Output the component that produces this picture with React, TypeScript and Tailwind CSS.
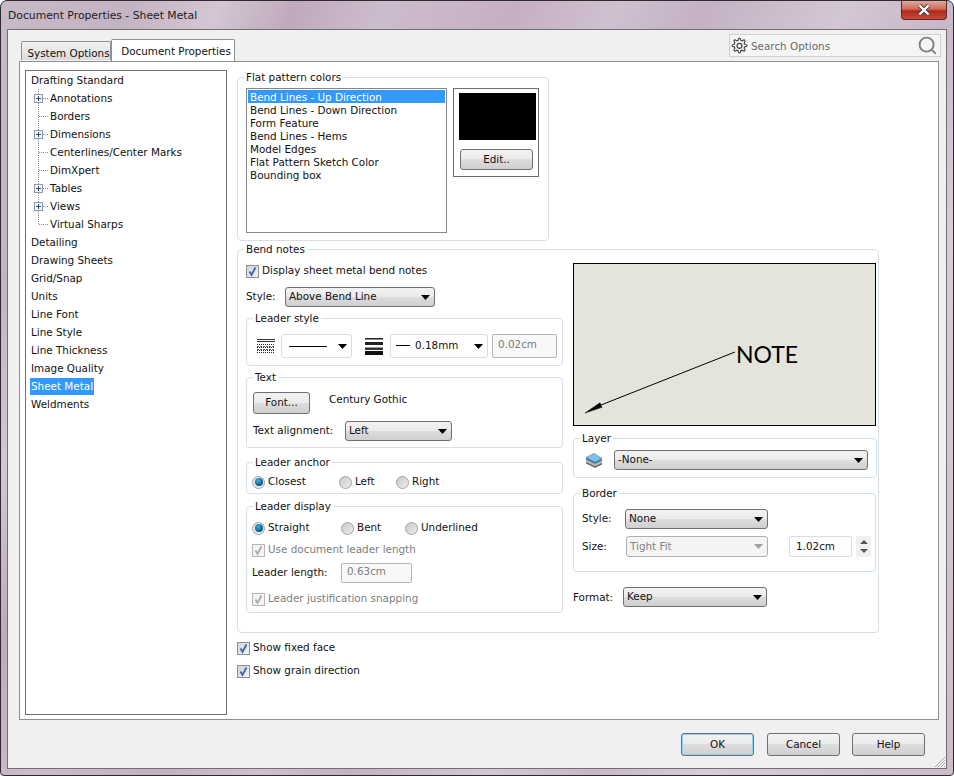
import React from "react";
import { Search } from "lucide-react";
import clsx from "clsx";

const treeItems = [
  { label: "Annotations", plus: true },
  { label: "Borders" },
  { label: "Dimensions", plus: true },
  { label: "Centerlines/Center Marks" },
  { label: "DimXpert" },
  { label: "Tables", plus: true },
  { label: "Views", plus: true },
  { label: "Virtual Sharps", last: true },
];

const rootItems = [
  "Detailing",
  "Drawing Sheets",
  "Grid/Snap",
  "Units",
  "Line Font",
  "Line Style",
  "Line Thickness",
  "Image Quality",
  "Sheet Metal",
  "Weldments",
];

const flatColors = [
  "Bend Lines - Up Direction",
  "Bend Lines - Down Direction",
  "Form Feature",
  "Bend Lines - Hems",
  "Model Edges",
  "Flat Pattern Sketch Color",
  "Bounding box",
];

function TreeGlyph({ plus, last }: { plus?: boolean; last?: boolean }) {
  return (
    <svg width="20" height="18" className="shrink-0" shapeRendering="crispEdges">
      <path d={last ? "M8.5 0V9" : "M8.5 0V18"} stroke="#8a8a8a" strokeDasharray="1 1" fill="none" />
      <path d="M9 9.5H19" stroke="#8a8a8a" strokeDasharray="1 1" fill="none" />
      {plus && (
        <>
          <rect x="4.5" y="5.5" width="8" height="8" fill="#f4f6f9" stroke="#919aa8" />
          <path d="M6 9.5H11M8.5 7V12" stroke="#2f4a80" fill="none" />
        </>
      )}
    </svg>
  );
}

function Group({
  title,
  className,
  bodyClassName,
  children,
}: {
  title: string;
  className?: string;
  bodyClassName?: string;
  children: React.ReactNode;
}) {
  return (
    <fieldset className={clsx("rounded-[4px] border border-[#d5dfe5]", className)}>
      <legend className="ml-[6px] h-[14px] px-[2px] leading-[14px]">{title}</legend>
      <div className={bodyClassName}>{children}</div>
    </fieldset>
  );
}

function Arrow({ color = "#000000" }: { color?: string }) {
  return (
    <svg width="9" height="5" viewBox="0 0 9 5" className="shrink-0">
      <path d="M0 0H9L4.5 5Z" fill={color} />
    </svg>
  );
}

function Select({
  value,
  className,
  variant = "normal",
  children,
}: {
  value?: string;
  className: string;
  variant?: "normal" | "flat" | "disabled";
  children?: React.ReactNode;
}) {
  return (
    <div
      className={clsx(
        "flex shrink-0 items-center justify-between rounded-[3px] border pl-[3px] pr-[4px]",
        variant === "normal" && "border-[#707070] bg-[linear-gradient(#f2f2f2_0%,#ebebeb_48%,#dddddd_50%,#cfcfcf_100%)]",
        variant === "flat" && "border-[#dcdcdc] bg-white",
        variant === "disabled" && "border-[#afafaf] bg-[#f4f4f4] text-[#838383]",
        className
      )}
    >
      {children ?? <span>{value}</span>}
      <Arrow color={variant === "disabled" ? "#a0a0a0" : "#000000"} />
    </div>
  );
}

function Button({ label, className }: { label: string; className?: string }) {
  return (
    <div
      className={clsx(
        "flex shrink-0 items-center justify-center rounded-[3px] border border-[#707070] bg-[linear-gradient(#f2f2f2_0%,#ebebeb_48%,#dddddd_50%,#cfcfcf_100%)]",
        className
      )}
    >
      {label}
    </div>
  );
}

function Checkbox({ label, disabled, className }: { label: string; disabled?: boolean; className?: string }) {
  return (
    <div className={clsx("flex h-[16px] items-center gap-[3px]", disabled && "text-[#7d7d7d]", className)}>
      <span
        className={clsx(
          "flex h-[13px] w-[13px] shrink-0 items-center justify-center border",
          disabled ? "border-[#b5b5b5] bg-[#f4f4f4]" : "border-[#8e8f8f] bg-[linear-gradient(135deg,#d0d5dc,#f0f2f5)]"
        )}
      >
        <svg width="11" height="11" viewBox="0 0 11 11">
          <path
            d="M2.5 5.5L4.5 9L8.5 1.5"
            fill="none"
            stroke={disabled ? "#a9a9a9" : "#4060b0"}
            strokeWidth="1.8"
          />
        </svg>
      </span>
      <span>{label}</span>
    </div>
  );
}

function Radio({ label, checked, className }: { label: string; checked?: boolean; className?: string }) {
  return (
    <div className={clsx("flex h-[16px] items-center gap-[3px]", className)}>
      <span
        className={clsx(
          "flex h-[13px] w-[13px] shrink-0 items-center justify-center rounded-full border",
          checked ? "border-[#9aa4ac] bg-[#e4eaee]" : "border-[#a2a2a2] bg-[linear-gradient(135deg,#c8c8c8,#eeeeee)]"
        )}
      >
        {checked && <span className="h-[8px] w-[8px] rounded-full bg-[radial-gradient(circle_at_40%_35%,#3fb4e2,#07517f_70%)]" />}
      </span>
      <span>{label}</span>
    </div>
  );
}

function Input({ value, className, disabled }: { value: string; className: string; disabled?: boolean }) {
  return (
    <div
      className={clsx(
        "flex shrink-0 items-center rounded-[2px] border px-[5px]",
        disabled ? "border-[#b5b5b5] bg-[#f8f8f8] text-[#7d7d7d]" : "border-[#dcdcdc] bg-white",
        className
      )}
    >
      {value}
    </div>
  );
}

function LineStyleIcon() {
  return (
    <svg width="18" height="14" viewBox="0 0 18 14" className="shrink-0" shapeRendering="crispEdges">
      <path d="M0 .5H18M0 2.5H18" stroke="#333333" />
      <path d="M0 5.5H18M0 8.5H18M0 11.5H18M0 13.500H18" stroke="#222222" strokeDasharray="1 1" />
      <path d="M0 7H18M0 10H18" stroke="#666666" strokeDasharray="2 1" />
    </svg>
  );
}

function LineThicknessIcon() {
  return (
    <svg width="18" height="17" viewBox="0 0 18 17" className="shrink-0">
      <rect x="0" y="0" width="18" height="1.5" fill="#222222" />
      <rect x="0" y="4" width="18" height="3" fill="#222222" />
      <rect x="0" y="9.5" width="18" height="2.5" fill="#333333" />
      <rect x="0" y="13" width="18" height="4" fill="#111111" />
    </svg>
  );
}

function LayerIcon() {
  return (
    <svg width="18" height="15" viewBox="0 0 18 15" className="shrink-0">
      <path d="M1 8.5L10 13L17 9.5V11.5L10 15L1 10.5Z" fill="#6b6b6b" />
      <path d="M1 6.5L10 11L17 7.5V9.5L10 13L1 8.5Z" fill="#b4b4b4" />
      <path d="M1 4.5L10 9L17 5.5V7.5L10 11L1 6.5Z" fill="#4a6f8a" />
      <path d="M1 4.5L9 .5L17 5.5L10 9Z" fill="#7cc0e8" stroke="#3f7ea8" strokeWidth=".6" />
    </svg>
  );
}

function GearIcon() {
  return (
    <svg width="17" height="17" viewBox="0 0 24 24" className="shrink-0" fill="none" stroke="#444444" strokeWidth="1.7">
      <path d="M12 1.5c1 0 1.600.5 1.900 3.200l2 .8c2-1.600 2.800-1.700 3.600-.9s.7 1.600-.9 3.600l.8 2c2.700.3 3.200.9 3.200 1.800s-.5 1.600-3.200 1.900l-.8 2c1.600 2 1.700 2.800.9 3.600s-1.600.7-3.600-.9l-2 .8c-.3 2.700-.9 3.200-1.900 3.200s-1.600-.5-1.900-3.200l-2-.8c-2 1.600-2.800 1.700-3.600.9s-.7-1.600.9-3.600l-.8-2c-2.700-.3-3.200-.9-3.200-1.900s.5-1.500 3.200-1.800l.8-2c-1.600-2-1.700-2.800-.9-3.600s1.600-.7 3.600.9l2-.8c.3-2.700.9-3.200 1.900-3.200Z" />
      <circle cx="12" cy="12.500" r="3.500" />
    </svg>
  );
}

export default function App() {
  return (
    <div className="flex h-[776px] w-[954px] flex-col overflow-hidden rounded-b-[4px] rounded-t-[7px] border border-[#2e2a30] bg-[linear-gradient(115deg,#c8bac8_0px,#c4b3c3_120px,#d4c6d4_200px,#bfaabd_270px,#cdbccd_350px,#c5b0c3_470px,#d0c0d0_560px,#c4b2c4_640px,#d4c7d4_770px,#c8b7c8_860px,#d8ccd8_960px,#c8b4c4_1300px)] font-['DejaVu_Sans',sans-serif] text-[10.4px] text-[#111111]">
      {/* Title bar */}
      <div className="flex h-[28px] shrink-0 items-start justify-between pl-[7px] pr-[6px]">
        <div className="mt-[7px] text-[10.8px] leading-[16px] text-[#1c1c1c]">Document Properties - Sheet Metal</div>
        <div className="flex h-[19px] w-[46px] items-center justify-center rounded-b-[4px] border border-t-0 border-[#5c2a2a] bg-[linear-gradient(#e0a79c_0%,#cf6a5a_45%,#b02a1c_55%,#c84a38_100%)]">
          <svg width="14" height="12" viewBox="0 0 14 12">
            <path d="M2.500 1.500L11.500 10.500M11.500 1.500L2.500 10.500" stroke="#3a3a3a" strokeWidth="4" />
            <path d="M2.500 1.500L11.500 10.500M11.500 1.500L2.500 10.500" stroke="#ffffff" strokeWidth="2.400" />
          </svg>
        </div>
      </div>

      {/* Client area */}
      <div className="mx-[6px] flex h-[740px] flex-col border border-[#6f6f6f] bg-[#f0f0f0]">
        <div className="flex h-[31px] shrink-0 items-start justify-between pl-[11px] pr-[5px]">
          <div className="relative z-10 ml-[2px] flex h-[32px] items-end self-end">
            <div className="mb-[1px] flex h-[19px] w-[90px] items-center justify-center whitespace-nowrap rounded-t-[2px] border border-b-0 border-[#8e8f8f] bg-[linear-gradient(#f2f2f2,#dcdcdc)] pl-[5px] pt-[6px]">
              System Options
            </div>
            <div className="flex h-[22px] w-[124px] items-center justify-center whitespace-nowrap rounded-t-[2px] border border-b-0 border-[#8e8f8f] bg-white pl-[6px] pt-[3px]">
              Document Properties
            </div>
          </div>
          <div className="mt-[4px] flex h-[23px] w-[212px] items-center border border-[#d0d0d0] bg-[#f5f5f5] pl-[1px] pr-[2px] text-[#6a6a6a]">
            <GearIcon />
            <span className="ml-[3px] mt-[2px]">Search Options</span>
            <Search className="ml-auto h-[21px] w-[21px] text-[#808080]" strokeWidth={2.2} />
          </div>
        </div>

        <div className="ml-[11px] flex h-[659px] w-[920px] gap-[10px] border border-[#8e8f8f] bg-white pb-[4px] pl-[5px] pt-[8px]">
          {/* Tree */}
          <div className="h-[645px] w-[202px] shrink-0 border border-[#6e7075] bg-white">
            <div className="flex h-[18px] items-center pl-[5px]">
              <span className="mt-[2px]">Drafting Standard</span>
            </div>
            {treeItems.map((item) => (
              <div key={item.label} className="flex h-[18px] items-center pl-[4px]">
                <TreeGlyph plus={item.plus} last={item.last} />
                <span className="mt-[2px]">{item.label}</span>
              </div>
            ))}
            {rootItems.map((label) => (
              <div key={label} className="flex h-[18px] items-center pl-[4px]">
                <span
                  className={clsx(
                    "px-[1px] leading-[17px]",
                    label === "Sheet Metal" && "bg-[#3399ff] text-white"
                  )}
                >
                  {label}
                </span>
              </div>
            ))}
          </div>

          {/* Options */}
          <div className="w-[642px] shrink-0">
            <Group title="Flat pattern colors" className="w-[312px]" bodyClassName="pb-[7px] pl-[8px] pt-[4px]">
              <div className="flex gap-[6px]">
                <div className="h-[145px] w-[201px] border border-[#7f8890] bg-white p-[1px]">
                  {flatColors.map((label, i) => (
                    <div
                      key={label}
                      className={clsx("h-[13px] pl-[2px] pt-[1px] leading-[13px]", i === 0 && "bg-[#3399ff] text-white")}
                    >
                      {label}
                    </div>
                  ))}
                </div>
                <div className="flex h-[89px] w-[86px] flex-col items-start border border-[#6e6e6e] pl-[5px] pt-[4px]">
                  <div className="h-[47px] w-[77px] bg-black" />
                  <Button label="Edit.." className="ml-[1px] mt-[9px] h-[21px] w-[73px]" />
                </div>
              </div>
            </Group>

            <Group title="Bend notes" className="mt-[1px] w-[642px]" bodyClassName="pb-[19px] pl-[8px] pt-[7px]">
              <div className="flex gap-[10px]">
                <div className="w-[317px] shrink-0">
                  <Checkbox label="Display sheet metal bend notes" />
                  <div className="mt-[8px] flex items-center">
                    <span className="w-[39px]">Style:</span>
                    <Select value="Above Bend Line" className="h-[20px] w-[150px]" />
                  </div>

                  <Group title="Leader style" className="mt-[4px]" bodyClassName="pb-[7px] pt-[9px]">
                    <div className="flex items-center pl-[10px]">
                      <LineStyleIcon />
                      <Select variant="flat" className="ml-[6px] h-[24px] w-[71px] pl-[7px]">
                        <span className="h-px w-[38px] bg-black" />
                      </Select>
                      <span className="ml-[13px]"><LineThicknessIcon /></span>
                      <Select variant="flat" className="ml-[7px] h-[24px] w-[98px] pl-[5px]">
                        <span className="flex items-center gap-[5px]">
                          <span className="h-px w-[14px] bg-black" />
                          0.18mm
                        </span>
                      </Select>
                      <Input value="0.02cm" disabled className="ml-[4px] h-[24px] w-[65px] pb-[3px]" />
                    </div>
                  </Group>

                  <Group title="Text" className="mt-[4px]" bodyClassName="pb-[6px] pl-[6px] pt-[8px]">
                    <div className="flex items-start">
                      <Button label="Font..." className="h-[22px] w-[57px]" />
                      <span className="ml-[19px]">Century Gothic</span>
                    </div>
                    <div className="mt-[7px] flex items-center">
                      <span className="w-[92px]">Text alignment:</span>
                      <Select value="Left" className="h-[20px] w-[107px]" />
                    </div>
                  </Group>

                  <Group title="Leader anchor" className="mt-[7px]" bodyClassName="pb-[3px] pl-[5px] pt-[5px]">
                    <div className="flex">
                      <Radio label="Closest" checked className="w-[87px]" />
                      <Radio label="Left" className="w-[57px]" />
                      <Radio label="Right" />
                    </div>
                  </Group>

                  <Group title="Leader display" className="mt-[5px]" bodyClassName="pb-[5px] pl-[5px] pt-[7px]">
                    <div className="flex">
                      <Radio label="Straight" checked className="w-[89px]" />
                      <Radio label="Bent" className="w-[64px]" />
                      <Radio label="Underlined" />
                    </div>
                    <Checkbox label="Use document leader length" disabled className="mt-[6px]" />
                    <div className="mt-[5px] flex items-center">
                      <span className="w-[89px]">Leader length:</span>
                      <Input value="0.63cm" disabled className="h-[20px] w-[71px] pb-[2px]" />
                    </div>
                    <Checkbox label="Leader justification snapping" disabled className="mt-[8px]" />
                  </Group>
                </div>

                <div className="w-[304px] shrink-0">
                  <div className="h-[163px] w-[303px] border border-black bg-[#e4e4dc]">
                    <svg width="301" height="161" viewBox="0 0 301 161">
                      <path d="M161 88L27 141" stroke="#000000" strokeWidth="1" />
                      <path d="M11 149L26 138.700L28 143.300Z" fill="#000000" stroke="#000000" strokeWidth=".5" />
                      <text x="162" y="99" fontFamily="Lato, sans-serif" fontSize="23" fill="#000000">
                        NOTE
                      </text>
                    </svg>
                  </div>

                  <Group title="Layer" className="mt-[5px]" bodyClassName="pb-[7px] pl-[11px] pt-[5px]">
                    <div className="flex items-center gap-[11px]">
                      <LayerIcon />
                      <Select value="-None-" className="h-[20px] w-[254px]" />
                    </div>
                  </Group>

                  <Group title="Border" className="mt-[8px] w-[303px]" bodyClassName="pb-[14px] pl-[8px] pt-[9px]">
                    <div className="flex items-center">
                      <span className="w-[43px]">Style:</span>
                      <Select value="None" className="h-[20px] w-[143px]" />
                    </div>
                    <div className="mt-[7px] flex items-center">
                      <span className="w-[44px]">Size:</span>
                      <Select value="Tight Fit" variant="disabled" className="h-[21px] w-[142px]" />
                      <Input value="1.02cm" className="ml-[21px] h-[21px] w-[63px] pl-[6px]" />
                      <div className="ml-[4px] flex h-[21px] w-[15px] flex-col items-center justify-center gap-[5px] bg-[#f0f0f0]">
                        <span className="h-0 w-0 border-x-[4px] border-b-[4px] border-x-transparent border-b-[#555555]" />
                        <span className="h-0 w-0 border-x-[4px] border-t-[4px] border-x-transparent border-t-[#555555]" />
                      </div>
                    </div>
                  </Group>

                  <div className="mt-[15px] flex items-center">
                    <span className="mt-[2px] w-[50px]">Format:</span>
                    <Select value="Keep" className="h-[20px] w-[144px]" />
                  </div>
                </div>
              </div>
            </Group>

            <Checkbox label="Show fixed face" className="mt-[7px]" />
            <Checkbox label="Show grain direction" className="mt-[7px]" />
          </div>
        </div>

        {/* Footer buttons */}
        <div className="relative flex flex-1 items-start justify-end gap-[12px] pr-[21px] pt-[13px]">
          <Button
            label="OK"
            className="mr-[1px] h-[23px] w-[73px] border-[#3c9fcf] bg-[linear-gradient(#eaf3f8_0%,#e0ecf3_48%,#cfdde6_50%,#c8d8e2_100%)] shadow-[0_0_0_1px_#8fd3f0_inset]"
          />
          <Button label="Cancel" className="h-[23px] w-[73px]" />
          <Button label="Help" className="h-[23px] w-[73px]" />
          <svg width="12" height="12" viewBox="0 0 12 12" className="absolute bottom-0 right-0">
            <path d="M11 1L1 11M11 4L4 11M11 7L7 11M11 10L10 11" stroke="#a8a8a8" />
          </svg>
        </div>
      </div>
    </div>
  );
}
